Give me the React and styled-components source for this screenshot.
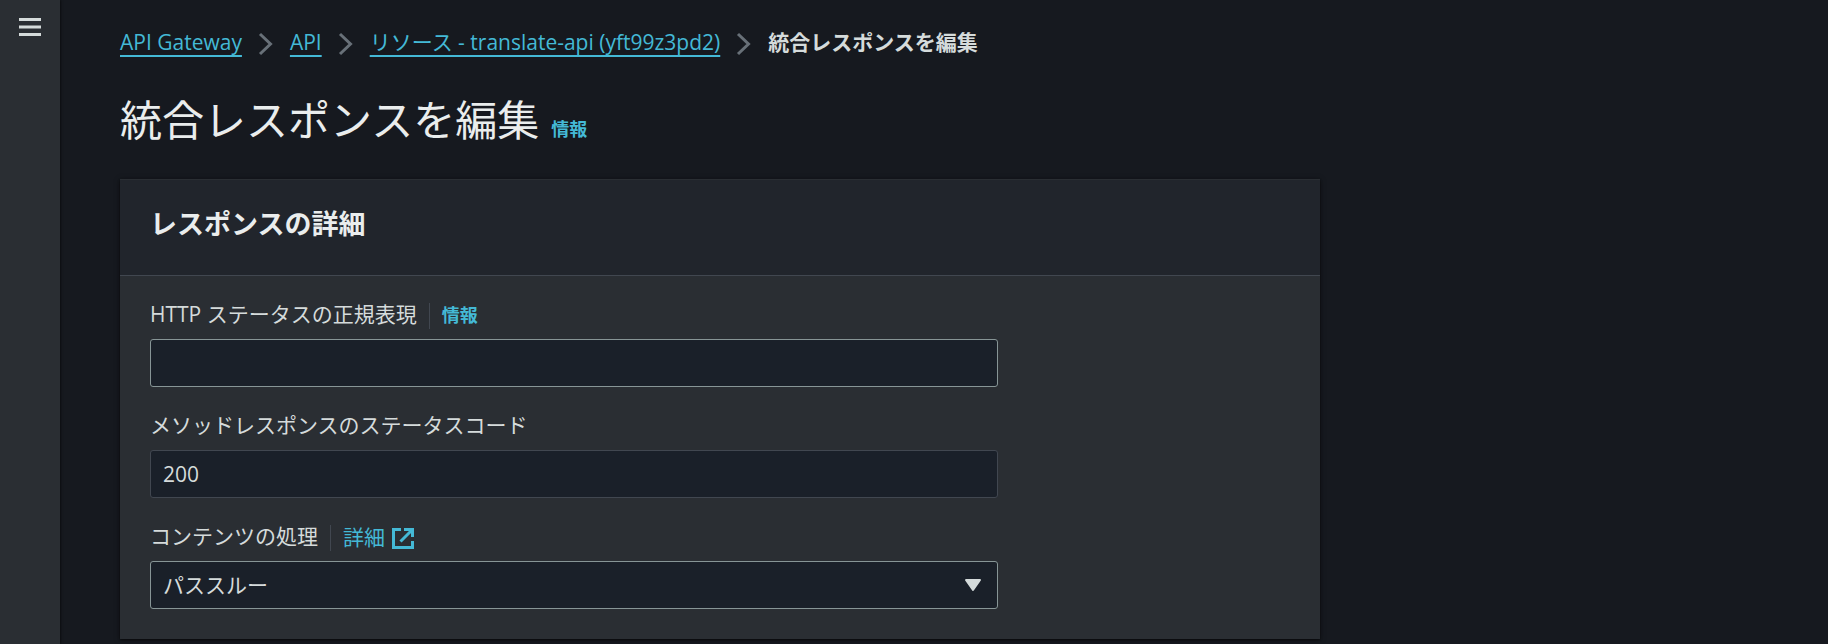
import React from 'react'
import styled, { createGlobalStyle } from 'styled-components'

const GlobalStyle = createGlobalStyle`
    * {
        box-sizing: border-box;
    }
    body {
        margin: 0;
        background-color: #16191f;
        color: #d5dbdb;
        font-family: "Open Sans", "Noto Sans CJK JP", sans-serif;
        font-size: 21px;
        line-height: 33px;
    }
`
const Page = styled.div`
    display: flex;
    min-height: 100vh;
`
const Sidebar = styled.aside`
    flex: 0 0 60px;
    padding-top: 15px;
    background-color: #2a2e33;
    box-shadow: 1px 0 2px rgba(0, 0, 0, 0.5);
    text-align: center;
`
const MenuButton = styled.button`
    padding: 0;
    border: 0;
    background: none;
    color: #d5dbdb;
    cursor: pointer;
    line-height: 0;
`
const Main = styled.main`
    flex: 1;
    min-width: 0;
    padding: 26px 60px 4px;
`
const Content = styled.div`
    max-width: 1200px;
`
const Breadcrumbs = styled.ol`
    display: flex;
    flex-wrap: wrap;
    margin: 0;
    padding: 0;
    list-style: none;
`
const Crumb = styled.li`
    display: flex;
    align-items: center;
    font-weight: ${props => props.$current ? 700 : 400};
`
const Chevron = styled.svg`
    margin: 2px 12px 0;
    color: #687078;
`
const Link = styled.a`
    color: #44b9d6;
    text-decoration: underline 2px;
    text-decoration-skip-ink: none;
    text-underline-offset: 5px;
`
const InfoLink = styled.a`
    color: #44b9d6;
    font-size: 18px;
    font-weight: 700;
    text-decoration: none;
`
const DocLink = styled.a`
    display: flex;
    align-items: center;
    gap: 6px;
    color: #44b9d6;
    text-decoration: none;
`
const TitleRow = styled.header`
    display: flex;
    align-items: baseline;
    gap: 12px;
    margin: 34px 0 32px;
`
const Title = styled.h1`
    margin: 0;
    color: #eaeded;
    font-size: 42px;
    font-weight: 400;
    line-height: 54px;
`
const Card = styled.section`
    background-color: #2a2e33;
    border-top: 1px solid #2a2e33;
    box-shadow: 0 1px 2px rgba(0, 0, 0, 0.5), 0 1px 6px rgba(0, 0, 0, 0.4);
`
const CardHeader = styled.div`
    padding: 26px 30px 33px;
    background-color: #21252c;
    border-bottom: 1px solid #414750;
`
const CardTitle = styled.h2`
    margin: 0;
    color: #eaeded;
    font-size: 27px;
    font-weight: 700;
    line-height: 36px;
`
const Form = styled.form`
    display: grid;
    grid-template-columns: minmax(0, 848px);
    gap: 22px;
    padding: 22px 30px 30px;
`
const LabelRow = styled.div`
    display: flex;
    align-items: center;
    height: 33px;
    margin-bottom: 8px;
`
const Aside = styled.span`
    display: flex;
    align-items: center;
    height: 26px;
    margin-top: 2px;
    margin-left: 12px;
    padding-left: 12px;
    border-left: 1px solid #414750;
`
const Input = styled.input`
    display: block;
    width: 100%;
    height: 48px;
    padding: 0 12px;
    border: 1px solid ${props => props.disabled ? '#414750' : '#879596'};
    border-radius: 3px;
    background-color: #1a2029;
    color: #d5dbdb;
    font: inherit;
`
const SelectBox = styled.div`
    position: relative;
`
const Select = styled(Input).attrs({ as: 'select' })`
    appearance: none;
    padding-right: 45px;
`
const Caret = styled.svg`
    position: absolute;
    top: 12px;
    right: 13px;
    color: #d5dbdb;
    pointer-events: none;
`

const Separator = () => (
    <Chevron width="24" height="24" viewBox="0 0 24 24" fill="none" stroke="currentColor" strokeWidth="3" aria-hidden="true">
        <path d="M6 2l10.5 10L6 22" />
    </Chevron>
)

const Field = ({ id, label, aside, children }) => (
    <div>
        <LabelRow>
            <label htmlFor={id}>{label}</label>
            {aside && <Aside>{aside}</Aside>}
        </LabelRow>
        {children}
    </div>
)

const App = () => {

        return (
            <>
                <GlobalStyle />
                <Page>
                    <Sidebar>
                        <MenuButton type="button" aria-label="メニュー">
                            <svg width="24" height="24" viewBox="0 0 24 24" stroke="currentColor" strokeWidth="3">
                                <path d="M1 4.5h22M1 12h22M1 19.5h22" />
                            </svg>
                        </MenuButton>
                    </Sidebar>
                    <Main>
                        <Content>
                            <nav>
                                <Breadcrumbs>
                                    <Crumb><Link href="#gateway">API Gateway</Link><Separator /></Crumb>
                                    <Crumb><Link href="#api">API</Link><Separator /></Crumb>
                                    <Crumb><Link href="#resources">リソース - translate-api (yft99z3pd2)</Link><Separator /></Crumb>
                                    <Crumb $current>統合レスポンスを編集</Crumb>
                                </Breadcrumbs>
                            </nav>
                            <TitleRow>
                                <Title>統合レスポンスを編集</Title>
                                <InfoLink href="#info">情報</InfoLink>
                            </TitleRow>
                            <Card>
                                <CardHeader>
                                    <CardTitle>レスポンスの詳細</CardTitle>
                                </CardHeader>
                                <Form>
                                    <Field id="regex" label="HTTP ステータスの正規表現" aside={<InfoLink href="#regex-info">情報</InfoLink>}>
                                        <Input id="regex" type="text" />
                                    </Field>
                                    <Field id="status" label="メソッドレスポンスのステータスコード">
                                        <Input id="status" type="text" defaultValue="200" disabled />
                                    </Field>
                                    <Field
                                        id="handling"
                                        label="コンテンツの処理"
                                        aside={
                                            <DocLink href="#docs">
                                                詳細
                                                <svg width="24" height="24" viewBox="0 0 24 24" fill="none" stroke="currentColor" strokeWidth="3">
                                                    <path d="M10 3.5H2.5v18h19V15M13 3.5h8.5V11M21 4L9.5 15.5" />
                                                </svg>
                                            </DocLink>
                                        }
                                    >
                                        <SelectBox>
                                            <Select id="handling">
                                                <option>パススルー</option>
                                            </Select>
                                            <Caret width="24" height="24" viewBox="0 0 24 24" fill="currentColor" stroke="currentColor" strokeWidth="2" strokeLinejoin="round" aria-hidden="true">
                                                <path d="M5 7h14l-7 10z" />
                                            </Caret>
                                        </SelectBox>
                                    </Field>
                                </Form>
                            </Card>
                        </Content>
                    </Main>
                </Page>
            </>
        );
}


export default App
